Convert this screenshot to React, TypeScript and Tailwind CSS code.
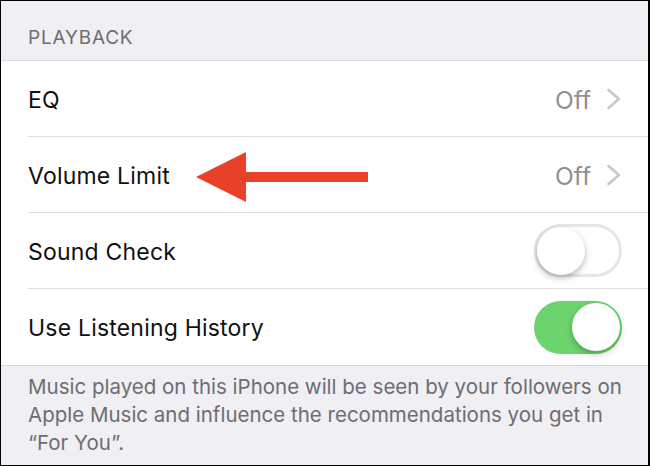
import React from 'react';

const Chevron = () => (
  <svg width="16" height="22" viewBox="0 0 16 22" className="ml-[15px]">
    <path d="M2.5 2 L13 11 L2.5 20" fill="none" stroke="#c7c7cc" strokeWidth="2.6" strokeLinecap="round" strokeLinejoin="round" />
  </svg>
);

const Toggle = ({ on }: { on: boolean }) =>
  on ? (
    <div className="w-[88px] h-[53px] rounded-full bg-[#6cd46c] flex items-center justify-end pr-[2px]">
      <div className="w-[48px] h-[48px] rounded-full bg-white shadow-[0_3px_6px_rgba(0,0,0,0.25)]" />
    </div>
  ) : (
    <div className="w-[88px] h-[53px] rounded-full border-[3px] border-[#e6e6ea] bg-white flex items-center">
      <div className="w-[48px] h-[48px] rounded-full bg-white shadow-[0_3px_6px_rgba(0,0,0,0.28)]" />
    </div>
  );

const Row = ({ label, children, last }: { label: string; children: React.ReactNode; last?: boolean }) => (
  <div className={last ? 'bg-white border-b border-[#d8d8dc]' : 'bg-white pl-[27px]'}>
    <div className={`h-[76px] flex items-center pr-[26px] ${last ? 'pl-[27px]' : 'border-b border-[#dedee2]'}`}>
      <span className="flex-1 pt-[3px] text-[23px] text-[#111] tracking-[0.2px]">{label}</span>
      {children}
    </div>
  </div>
);

const Value = () => (
  <div className="flex items-center">
    <span className="pt-[3px] text-[24.5px] text-[#8e8e93]">Off</span>
    <Chevron />
  </div>
);

export default function App() {
  return (
    <div
      className="w-[650px] h-[466px] bg-[#efeff4] border-t border-l border-b border-r-2 border-black overflow-hidden"
      style={{ fontFamily: 'Inter, "Noto Sans", sans-serif' }}
    >
      <div className="h-[60px] flex items-center pl-[27px] border-b border-[#dcdce0] pt-[16px]">
        <span className="text-[19px] text-[#6d6d72] tracking-[0.8px]">PLAYBACK</span>
      </div>

      <Row label="EQ">
        <Value />
      </Row>
      <div className="relative">
        <Row label="Volume Limit">
          <Value />
        </Row>
        <svg className="absolute left-[194px] top-[15px]" width="176" height="52" viewBox="0 0 176 52">
          <polygon points="1,25 51,0 51,50" fill="#e8412a" />
          <rect x="50" y="20" width="123" height="10" fill="#e8412a" />
        </svg>
      </div>
      <Row label="Sound Check">
        <Toggle on={false} />
      </Row>
      <Row label="Use Listening History" last>
        <Toggle on />
      </Row>

      <p className="pl-[27px] pr-[10px] pt-[7px] text-[20.5px] leading-[28px] text-[#6d6d72] whitespace-nowrap">
        Music played on this iPhone will be seen by your followers on
        <br />
        Apple Music and influence the recommendations you get in
        <br />
        “For You”.
      </p>
    </div>
  );
}
